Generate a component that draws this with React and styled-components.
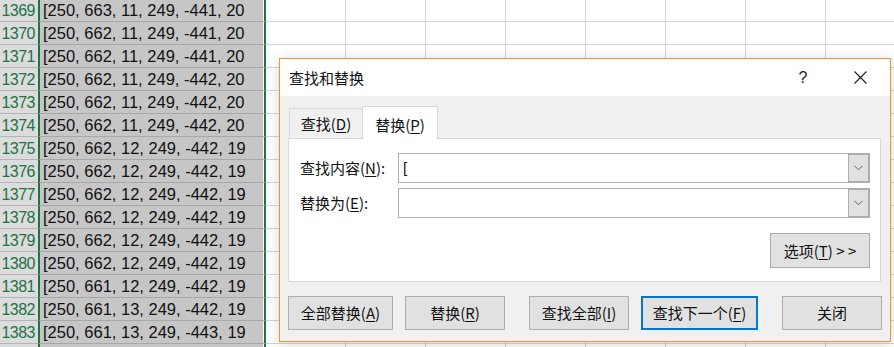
import React from "react";
import styled, { createGlobalStyle } from "styled-components";

const rows = [
  ["1369", "[250, 663, 11, 249, -441, 20"],
  ["1370", "[250, 662, 11, 249, -441, 20"],
  ["1371", "[250, 662, 11, 249, -441, 20"],
  ["1372", "[250, 662, 11, 249, -442, 20"],
  ["1373", "[250, 662, 11, 249, -442, 20"],
  ["1374", "[250, 662, 11, 249, -442, 20"],
  ["1375", "[250, 662, 12, 249, -442, 19"],
  ["1376", "[250, 662, 12, 249, -442, 19"],
  ["1377", "[250, 662, 12, 249, -442, 19"],
  ["1378", "[250, 662, 12, 249, -442, 19"],
  ["1379", "[250, 662, 12, 249, -442, 19"],
  ["1380", "[250, 662, 12, 249, -442, 19"],
  ["1381", "[250, 661, 12, 249, -442, 19"],
  ["1382", "[250, 661, 13, 249, -442, 19"],
  ["1383", "[250, 661, 13, 249, -443, 19"],
  ["", ""],
];

const blankCols = [0, 1, 2, 3, 4, 5, 6, 7];

function Chevron() {
  return (
    <svg width="9" height="6" viewBox="0 0 9 6">
      <path d="M0.5 0.8 L4.5 4.8 L8.5 0.8" fill="none" stroke="#606060" strokeWidth="1" />
    </svg>
  );
}

function CloseIcon() {
  return (
    <svg width="13" height="13" viewBox="0 0 13 13">
      <path d="M0.5 0.5 L12.5 12.5 M12.5 0.5 L0.5 12.5" stroke="#1a1a1a" strokeWidth="1.1" />
    </svg>
  );
}

function Combo({ value }) {
  return (
    <ComboBox>
      <ComboText>{value}</ComboText>
      <DropButton>
        <Chevron />
      </DropButton>
    </ComboBox>
  );
}

export default function App() {
  return (
    <>
      <GlobalStyle />
      <Page>
        <Sheet>
          {rows.map(([num, text], i) => (
            <Row key={i}>
              <RowHeader>{num}</RowHeader>
              <SelCell>{text}</SelCell>
              {blankCols.map((c) => (
                <BlankCell key={c} />
              ))}
            </Row>
          ))}
        </Sheet>

        <Dialog>
          <TitleBar>
            <Title>查找和替换</Title>
            <TitleButton>?</TitleButton>
            <TitleButton $close>
              <CloseIcon />
            </TitleButton>
          </TitleBar>

          <Body>
            <TabRow>
              <Tab>
                查找(<u>D</u>)
              </Tab>
              <Tab $active>
                替换(<u>P</u>)
              </Tab>
            </TabRow>

            <Panel>
              <FieldRow>
                <Label>
                  查找内容(<u>N</u>):
                </Label>
                <Combo value="[" />
              </FieldRow>
              <FieldRow $gap>
                <Label>
                  替换为(<u>E</u>):
                </Label>
                <Combo value="" />
              </FieldRow>
              <OptionsRow>
                <Button $w={100} $h={35}>
                  选项(<u>T</u>) &gt; &gt;
                </Button>
              </OptionsRow>
            </Panel>

            <ButtonRow>
              <Button $w={105}>
                全部替换(<u>A</u>)
              </Button>
              <Button $w={100} $lead={12}>
                替换(<u>R</u>)
              </Button>
              <Button $w={100} $lead={24}>
                查找全部(<u>I</u>)
              </Button>
              <Button $w={117} $lead={12} $primary>
                查找下一个(<u>F</u>)
              </Button>
              <Button $w={100} $lead={24}>
                关闭
              </Button>
            </ButtonRow>
          </Body>
        </Dialog>
      </Page>
    </>
  );
}

const GlobalStyle = createGlobalStyle`
  html, body {
    margin: 0;
    padding: 0;
    background: #fff;
    overflow: hidden;
  }
  u {
    text-decoration-thickness: 1px;
    text-underline-offset: 2px;
  }
`;

const Page = styled.div`
  position: relative;
  width: 894px;
  height: 347px;
  overflow: hidden;
`;

const Sheet = styled.div`
  display: flex;
  flex-direction: column;
  margin-top: -1px;
  font-family: "Liberation Sans", Arial, sans-serif;
`;

const Row = styled.div`
  display: flex;
  height: 23px;
`;

const RowHeader = styled.div`
  box-sizing: border-box;
  width: 38px;
  height: 23px;
  flex: none;
  background: #dcdcdc;
  border-bottom: 1px solid #b4b4b4;
  color: #217346;
  font-size: 16px;
  letter-spacing: -0.5px;
  line-height: 23px;
  text-align: right;
  padding-right: 3px;
`;

const SelCell = styled.div`
  box-sizing: border-box;
  width: 228px;
  height: 23px;
  flex: none;
  background: #c6c6c6;
  border-left: 2px solid #217346;
  border-right: 2px solid #217346;
  border-bottom: 1px solid #a8a8a8;
  box-shadow: inset -1px 0 0 #ffffff;
  color: #111;
  font-size: 16.5px;
  line-height: 23px;
  padding-left: 3px;
  white-space: nowrap;
  overflow: hidden;
`;

const BlankCell = styled.div`
  box-sizing: border-box;
  width: 80px;
  height: 23px;
  flex: none;
  border-right: 1px solid #d4d4d4;
  border-bottom: 1px solid #d4d4d4;
`;

const Dialog = styled.div`
  position: absolute;
  left: 279px;
  top: 58px;
  box-sizing: border-box;
  width: 612px;
  height: 284px;
  border: 1px solid #e3963a;
  background: #f0f0f0;
  box-shadow: 0 2px 12px rgba(0, 0, 0, 0.16);
  display: flex;
  flex-direction: column;
  font-family: "Noto Sans CJK SC", "Liberation Sans", sans-serif;
  font-size: 15px;
  color: #111;
`;

const TitleBar = styled.div`
  display: flex;
  align-items: center;
  height: 37px;
  background: #fff;
  padding-left: 9px;
  padding-right: 7px;
`;

const Title = styled.div`
  flex: 1;
  line-height: 20px;
  margin-top: 1px;
`;

const TitleButton = styled.div`
  width: 46px;
  height: 37px;
  display: flex;
  align-items: center;
  justify-content: center;
  margin-left: ${(p) => (p.$close ? "11px" : "0")};
  font-family: "Liberation Sans", sans-serif;
  font-size: 16px;
  color: #1a1a1a;
`;

const Body = styled.div`
  flex: 1;
  display: flex;
  flex-direction: column;
  padding: 10px 9px 0 8px;
`;

const TabRow = styled.div`
  display: flex;
  align-items: flex-end;
  height: 33px;
  padding-left: 1px;
  margin-bottom: -1px;
  position: relative;
  z-index: 1;
`;

const Tab = styled.div`
  box-sizing: border-box;
  display: flex;
  align-items: center;
  justify-content: center;
  width: ${(p) => (p.$active ? "76px" : "73px")};
  height: ${(p) => (p.$active ? "33px" : "30px")};
  margin-bottom: ${(p) => (p.$active ? "0" : "1px")};
  background: ${(p) => (p.$active ? "#fff" : "#f0f0f0")};
  border-top: 1px solid #d9d9d9;
  border-left: 1px solid #d9d9d9;
  border-right: ${(p) => (p.$active ? "1px solid #d9d9d9" : "none")};
  padding-top: ${(p) => (p.$active ? "3px" : "0")};
  line-height: 20px;
`;

const Panel = styled.div`
  box-sizing: border-box;
  height: 144px;
  background: #fff;
  border: 1px solid #d9d9d9;
  padding: 14px 10px 13px 11px;
  display: flex;
  flex-direction: column;
`;

const FieldRow = styled.div`
  display: flex;
  align-items: center;
  height: 30px;
  margin-top: ${(p) => (p.$gap ? "5px" : "0")};
`;

const Label = styled.div`
  width: 98px;
  flex: none;
  line-height: 20px;
`;

const ComboBox = styled.div`
  box-sizing: border-box;
  flex: 1;
  height: 30px;
  display: flex;
  border: 1px solid #adadad;
  background: #fff;
`;

const ComboText = styled.div`
  flex: 1;
  padding-left: 4px;
  line-height: 27px;
  font-family: "Liberation Sans", sans-serif;
  font-size: 15px;
`;

const DropButton = styled.div`
  width: 21px;
  display: flex;
  align-items: center;
  justify-content: center;
  background: #e1e1e1;
  box-shadow: inset 1px 0 0 #adadad, inset 0 0 0 1px #adadad;
`;

const OptionsRow = styled.div`
  display: flex;
  justify-content: flex-end;
  margin-top: 15px;
`;

const ButtonRow = styled.div`
  display: flex;
  margin-top: 14px;
`;

const Button = styled.div`
  box-sizing: border-box;
  width: ${(p) => p.$w}px;
  height: ${(p) => p.$h || 34}px;
  margin-left: ${(p) => p.$lead || 0}px;
  flex: none;
  display: flex;
  align-items: center;
  justify-content: center;
  background: #e1e1e1;
  border: ${(p) => (p.$primary ? "2px solid #0078d7" : "1px solid #adadad")};
  line-height: 20px;
  white-space: nowrap;
`;
